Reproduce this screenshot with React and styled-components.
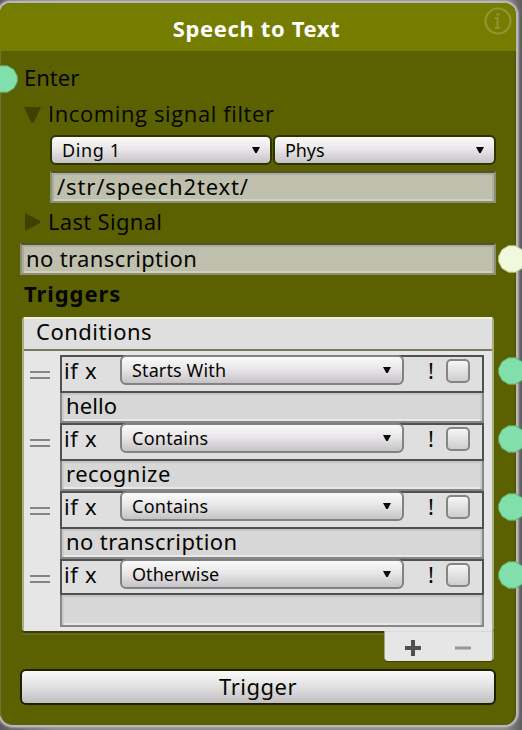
import React from 'react';
import styled, { createGlobalStyle } from 'styled-components';

const GlobalStyle = createGlobalStyle`
  *, *::before, *::after { box-sizing: border-box; }
  body {
    margin: 0;
    background: #77747a;
    font-family: "Noto Sans", "Open Sans", sans-serif;
    color: #060600;
  }
`;

const Canvas = styled.div`
  width: 522px;
  height: 730px;
  overflow: hidden;
  padding-top: 3px;
  background: linear-gradient(90deg, #5d5b60, #8b898c 10%, #8b898c 97%, #5c5c5c);
`;

const Node = styled.main`
  position: relative;
  display: flex;
  flex-direction: column;
  width: 516px;
  height: 722px;
  border-radius: 10px 12px 12px 13px;
  background: #5b6100;
  box-shadow: inset 2px 0 1px -1px #72763a, inset -2px 0 2px -1px #4d5200,
    0 0 0 2px #b9b7b9, 0 0 2px 3px #a5a3a6;
`;

const Header = styled.header`
  position: relative;
  display: flex;
  flex: none;
  justify-content: center;
  align-items: center;
  height: 48px;
  padding: 3px 3px 0 0;
  border-radius: 10px 12px 0 0;
  background: #757d00;
`;

const Label = styled.span`
  padding-bottom: 2px;
  font-family: ${({ $plain }) => ($plain ? '"Open Sans", sans-serif' : 'inherit')};
  font-size: ${({ $size = 22 }) => $size}px;
  font-weight: ${({ $bold }) => ($bold ? 700 : 400)};
  line-height: 36px;
  letter-spacing: ${({ $track = 0 }) => $track}px;
  white-space: pre;
`;

const Title = styled(Label)`
  color: #fff;
`;

const InfoIcon = styled.svg`
  position: absolute;
  top: 3px;
  right: 4px;
  width: 28px;
  height: 30px;
`;

const Content = styled.div`
  display: flex;
  flex-direction: column;
  padding: 9px 20px 0;
`;

const Line = styled.div`
  display: flex;
  align-items: center;
  height: ${({ $height = 36 }) => $height}px;
  padding-left: 4px;
  gap: 7px;
`;

const SignalLine = styled(Line)`
  padding-bottom: 2px;
`;

const SectionLine = styled(Line)`
  padding-top: 2px;
`;

const Fold = styled.svg`
  flex: none;
  width: 17px;
  height: 18px;
  fill: #3e4200;
`;

const SelectRow = styled.div`
  display: flex;
  gap: 1px;
  height: 39px;
  padding: 3px 0 0 30px;
`;

const Select = styled.div`
  display: flex;
  flex: ${({ $width }) => ($width ? `0 0 ${$width}px` : '1')};
  align-items: center;
  justify-content: space-between;
  height: 30px;
  padding: 0 ${({ $soft }) => ($soft ? 11 : 10)}px 0 10px;
  border: 2px solid ${({ $soft }) => ($soft ? '#828282' : '#303400')};
  border-radius: 6px;
  background: linear-gradient(#fbfbfb, #e9e7e9 45%, #c5c3c5);

  ${Label} { padding-bottom: 0; }
`;

const Arrow = styled.svg`
  width: 8px;
  height: 8px;
`;

const Field = styled.div`
  display: flex;
  align-items: center;
  width: ${({ $width }) => $width}px;
  height: 32px;
  margin-left: ${({ $indent = 0 }) => $indent}px;
  padding-left: ${({ $indent }) => ($indent ? 5 : 4)}px;
  border: 2px solid #8c8f73;
  border-top-color: #50532f;
  background: #bec0ad;
  box-shadow: inset 0 2px #aaad98, inset 2px 0 #a9ac97, inset -2px 0 #b0b39f,
    inset 0 -2px #cdd0bb;
`;

const Panel = styled.section`
  display: flex;
  flex-direction: column;
  width: 472px;
  height: 314px;
  margin: 6px 0 0 2px;
  border: solid #aaae85;
  border-width: 0 2px 0 2px;
  border-radius: 3px 3px 2px 2px;
  background: #e6e6e6;
  box-shadow: 0 2px #3b3f00, 0 4px #666b24;
`;

const PanelHeader = styled.div`
  display: flex;
  align-items: center;
  height: 34px;
  padding: 0 0 4px 12px;
  border-top: 2px solid #f0f2d9;
  border-bottom: 2px solid #777961;
  background: #dfdfdf;
`;

const ConditionList = styled.div`
  display: flex;
  flex-direction: column;
  padding-top: 4px;
`;

const Condition = styled.div`
  position: relative;
  display: flex;
  gap: 10px;
  height: 68px;
  padding-left: 6px;
`;

const Handle = styled.div`
  width: 20px;
  height: 8px;
  margin-top: 16px;
  border: solid #858585;
  border-width: 2px 0;
`;

const Rule = styled.div`
  display: flex;
  flex-direction: column;
  width: 424px;
`;

const Test = styled.div`
  display: flex;
  height: 38px;
  padding-left: 2px;
  border: 2px solid #505050;
  background: #dfdfdf;

  > ${Select} { margin-top: -2px; }
`;

const Variable = styled(Label)`
  width: 56px;
  line-height: 26px;
`;

const Bang = styled(Label)`
  width: 42px;
  padding-left: 24px;
  line-height: 26px;
`;

const Check = styled.div`
  width: 24px;
  height: 24px;
  margin-top: 2px;
  border: 2px solid #858585;
  border-radius: 5px;
  background: linear-gradient(#f6f6f6, #cfcdcf);
`;

const Value = styled.div`
  display: flex;
  align-items: center;
  height: ${({ $last }) => ($last ? 34 : 30)}px;
  padding: 0 0 2px 4px;
  border: solid #878787;
  border-width: 0 2px 2px;
  background: #d7d7d7;
  box-shadow: inset 0 2px #c5c5c5, inset 2px 0 #cbcbcb, inset -2px 0 #cbcbcb,
    inset 0 -2px #e8e8e8;
`;

const Port = styled.svg`
  position: absolute;
  width: 28px;
  height: 28px;
  left: ${({ $x }) => $x}px;
  top: ${({ $y }) => $y}px;
  fill: ${({ $pale }) => ($pale ? '#f0f9dc' : '#80dfaa')};
  stroke: ${({ $pale }) => ($pale ? '#bdc698' : '#65a863')};
  stroke-width: 1;
`;

const ListFooter = styled.div`
  position: relative;
  display: flex;
  align-items: center;
  justify-content: space-between;
  align-self: flex-end;
  width: 110px;
  height: 30px;
  margin-right: 2px;
  padding: 3px 21px 0 20px;
  border: solid #a2a67e;
  border-width: 0 2px 0 1px;
  border-radius: 0 0 4px 4px;
  background: #e6e6e6;
  box-shadow: inset 0 1px #dadada, 0 1px #3b3f00;
`;

const FooterIcon = styled.svg`
  width: 16px;
  height: 16px;
`;

const TriggerButton = styled.div`
  display: flex;
  align-items: center;
  justify-content: center;
  width: 476px;
  height: 36px;
  margin-top: 8px;
  border: 2px solid #1c1f00;
  border-radius: 6px;
  background: linear-gradient(#fafafa, #e4e3e4 45%, #c1bfc1);
`;

const rules = [
  { op: 'Starts With', opTrack: 0.13, value: 'hello', track: 0.1 },
  { op: 'Contains', opTrack: 0.25, value: 'recognize', track: 0.48 },
  { op: 'Contains', opTrack: 0.25, value: 'no transcription', track: 0.4 },
  { op: 'Otherwise', opTrack: 0.05, value: '', track: 0 },
];

function Dropdown({ text, track, width, soft }) {
  return (
    <Select $width={width} $soft={soft}>
      <Label $size={18} $track={track}>{text}</Label>
      <Arrow viewBox="0 0 8 8"><path d="M0 1h8L4.7 7H3.3z" fill="#080808" /></Arrow>
    </Select>
  );
}

function Connector({ x, y, pale }) {
  return (
    <Port $x={x} $y={y} $pale={pale} viewBox="0 0 28 28">
      <path d="M10.5.8h7L24 4.700l3.300 6.500v5.600L24 23.300l-6.500 3.900h-7L4 23.300.7 16.800v-5.600L4 4.700z" strokeLinejoin="round" />
    </Port>
  );
}

export default function App() {
  return (
    <>
      <GlobalStyle />
      <Canvas>
        <Node>
          <Header>
            <Title $bold $track={0.62}>Speech to Text</Title>
            <InfoIcon viewBox="0 0 28 30" fill="none" stroke="#8f9535">
              <circle cx="14" cy="15" r="12.500" strokeWidth="2.200" />
              <path d="M12.300 8.500h3M11 12h2.500v10M11 22h5" strokeWidth="2" />
            </InfoIcon>
          </Header>
          <Content>
            <Line><Label>Enter</Label></Line>
            <Line>
              <Fold viewBox="0 0 17 18"><path d="M0 2h17L9.500 18h-2z" /></Fold>
              <Label $plain $track={0.61}>Incoming signal filter</Label>
            </Line>
            <SelectRow>
              <Dropdown text="Ding 1" track={0.6} width={222} />
              <Dropdown text="Phys" track={-0.1} />
            </SelectRow>
            <Field $indent={30} $width={446}>
              <Label $track={0.86}>/str/speech2text/</Label>
            </Field>
            <SignalLine $height={40}>
              <Fold viewBox="0 0 17 18"><path d="M1 0l15 8v2L1 18z" /></Fold>
              <Label $track={0.3}>Last Signal</Label>
            </SignalLine>
            <Field $width={476}><Label $track={0.38}>no transcription</Label></Field>
            <SectionLine><Label $bold $track={0.92}>Triggers</Label></SectionLine>
            <Panel>
              <PanelHeader><Label $track={0.5}>Conditions</Label></PanelHeader>
              <ConditionList>
                {rules.map((rule, i) => (
                  <Condition key={i}>
                    <Handle />
                    <Rule>
                      <Test>
                        <Variable $track={0.67}>if x</Variable>
                        <Dropdown text={rule.op} track={rule.opTrack} width={284} soft />
                        <Bang>!</Bang>
                        <Check />
                      </Test>
                      <Value $last={i === rules.length - 1}>
                        <Label $track={rule.track}>{rule.value}</Label>
                      </Value>
                    </Rule>
                    <Connector x={474} y={2} />
                  </Condition>
                ))}
              </ConditionList>
            </Panel>
            <ListFooter>
              <FooterIcon viewBox="0 0 16 16" stroke="#505050" strokeWidth="4"><path d="M0 8h16M8 0v16" /></FooterIcon>
              <FooterIcon viewBox="0 0 16 16" stroke="#999" strokeWidth="3"><path d="M0 8h16" /></FooterIcon>
            </ListFooter>
            <TriggerButton><Label $track={0.5}>Trigger</Label></TriggerButton>
          </Content>
          <Connector x={-10} y={62} />
          <Connector x={498} y={242} pale />
        </Node>
      </Canvas>
    </>
  );
}
